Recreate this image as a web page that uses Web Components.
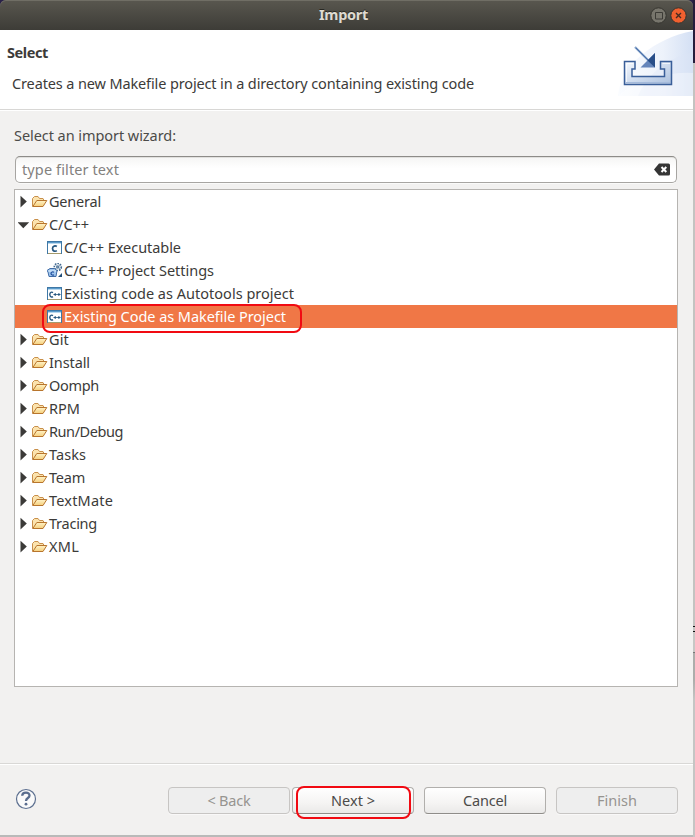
<!DOCTYPE html>
<html lang="en"><head><meta charset="utf-8"><title>Import</title>
<style>
html,body{margin:0;height:837px;overflow:hidden;background:#b9b9b7}
</style></head><body>
<import-dialog></import-dialog>
<script>
const define=(name,html,setup)=>customElements.define(name,class extends HTMLElement{
  connectedCallback(){
    if(this.shadowRoot)return;
    const t=document.createElement('template');t.innerHTML=html;
    this.attachShadow({mode:'open'}).append(t.content.cloneNode(true));
    if(setup)setup.call(this,this.shadowRoot);
  }
});

/* A line of text whose tracking is set so that it takes the width in its w attribute. */
define('ui-text',`<style>:host{display:inline-block;white-space:nowrap;line-height:18px;padding-bottom:2px}span{display:inline-block}</style><span><slot></slot></span>`,
function(root){
  const span=root.querySelector('span'),w=+this.getAttribute('w');
  const natural=span.getBoundingClientRect().width;
  if(w&&natural)span.style.letterSpacing=((w-natural)/this.textContent.length).toFixed(3)+'px';
});

const folder=`<svg width="16" height="16" viewBox="0 0 16 16"><defs><linearGradient id="f" x2="0" y2="1"><stop stop-color="#fff3c8"/><stop offset="1" stop-color="#f5cf7c"/></linearGradient></defs><path d="M.5 12.500V4.500L2.500 2.500h3.500L7.500 4.500H11L11.500 5V7" fill="#fbe3ae" stroke="#c88f4a"/><path d="M.8 12.500L4.800 6.500H14.800L11 12.500Z" fill="url(#f)" stroke="#b8752d" stroke-linejoin="round"/></svg>`;
const file=(s)=>`<svg width="16" height="16" viewBox="0 0 16 16"><rect x=".5" y="1.500" width="14" height="12" fill="#fff" stroke="#3f78a6"/><path d="M1 2h13v1H1z" fill="#5b9bcb"/><path d="M1 3h13v1H1z" fill="#b8d7ed"/><path d="M1 13.500h13" stroke="#a59a6c"/>${s}</svg>`;
const cShape=`<path d="M9.800 6.500C8.500 5.500 5.500 5.800 5.500 8.600S8.500 11.700 9.800 10.700" fill="none" stroke="#275780" stroke-width="1.700"/>`;
const cppShape=`<path d="M6 6.600C4.800 5.700 2.800 6 2.800 8.600S4.800 11.400 6 10.600" fill="none" stroke="#275780" stroke-width="1.400"/><path d="M6.500 8.500h3.300M8.200 7v3M10.200 8.500h3.300M11.900 7v3" stroke="#275780" stroke-width="1"/>`;
const settings=`<svg width="16" height="16" viewBox="0 0 16 16"><g fill="none" stroke="#426a91"><circle cx="10.800" cy="4" r="3.500" stroke-width="1.600" stroke-dasharray="1.600 1"/><circle cx="10.800" cy="4" r="1.200"/><path d="M8 1.500l5.500 5M8 6.500l5.500-5" stroke-width=".6"/></g><path d="M0 7.500L3 5.500h4.500L10 7.500 9 13.500H2L1 9Z" fill="#9fc5ed" stroke="#406ca7"/><path d="M1.500 8h7.500" stroke="#e1f1ff"/><path d="M7 9.300C6 8.600 4 8.800 4 10.500S6 12.400 7 11.700" fill="none" stroke="#204f9d" stroke-width="1.200"/><path d="M11 14h4v-4z" fill="#234f78"/></svg>`;
const icons={folder,c:file(cShape),cpp:file(cppShape),settings};

define('tree-row',`<style>
:host{display:flex;align-items:center;height:23px;padding-left:3px;box-sizing:border-box;color:#3c3b39}
:host([child]){padding-left:18px}
:host([selected]){background:#f07746;color:#fff}
.arrow{width:14px;height:16px;flex:none}.icon{width:16px;height:16px;flex:none;margin-right:1px}
.arrow svg,.icon svg{display:block}
</style><span class="arrow"></span><span class="icon"></span><slot></slot>`,
function(r){
  const state=this.getAttribute('state');
  r.querySelector('.icon').innerHTML=icons[this.getAttribute('icon')||'folder'];
  if(state!=='none')r.querySelector('.arrow').innerHTML=`<svg width="13" height="16"><path d="${state==='open'?'M-.500 5.300H11.200L5.300 11.300Z':'M2.500 1.800L8.800 7.500 2.500 13.500Z'}" fill="#3b3a38"/></svg>`;
});

define('push-button',`<style>
:host{display:flex;align-items:center;justify-content:center;box-sizing:border-box;width:122px;height:27px;border:1px solid #b1afac;border-bottom-color:#8f8d89;border-radius:4px;background:linear-gradient(#fff,#f5f4f3 60%,#eae9e8);box-shadow:0 1px #fff8;color:#4c4b49}
:host([disabled]){background:#eee;border-color:#c7c5c3;color:#969490}
</style><slot></slot>`);

define('title-bar',`<style>
:host{display:grid;grid-template-columns:1fr auto 1fr;align-items:center;height:30px;background:linear-gradient(#59574f,#3d3c37);border-radius:6px 6px 0 0;box-shadow:inset 0 1px #706e65;color:#dfdbd2;font-weight:700;text-shadow:0 -1px #292822}
.title{grid-column:2;margin-left:-6px;padding-bottom:2px}.controls{display:flex;gap:3px;justify-content:end;padding-right:6px}svg{display:block}
</style><span class="title"><slot></slot></span><span class="controls">
<svg width="17" height="17"><circle cx="8.500" cy="8.500" r="7.700" fill="#77756c" stroke="#35342f"/><path d="M5.500 5.500h7v6.500h-7z" fill="none" stroke="#3c3b36"/></svg>
<svg width="17" height="17"><circle cx="8.500" cy="8.500" r="7.700" fill="#f0602f" stroke="#35342f"/><path d="M6 6l5 5M11 6l-5 5" stroke="#462a20" stroke-width="1.400"/></svg></span>`);

define('wizard-header',`<style>
:host{display:flex;justify-content:space-between;height:79px;background:#fff;border-bottom:1px solid #d8d7d5;box-shadow:0 1px #fff}
.copy{display:flex;flex-direction:column;padding:12px 0 0 7px;color:#3c3b39}
.heading{font-weight:700;height:31px}.description{padding-left:5px}svg{display:block}
</style><div class="copy"><div class="heading"><slot name="heading"></slot></div><div class="description"><slot></slot></div></div>
<svg width="75" height="67" viewBox="0 0 75 67"><defs><linearGradient id="g"><stop stop-color="#fafcff"/><stop offset=".6" stop-color="#edf2fb"/><stop offset="1" stop-color="#d4e0f4"/></linearGradient><linearGradient id="i" x2="1" y2="1"><stop stop-color="#f5f9ff"/><stop offset="1" stop-color="#abc0de"/></linearGradient></defs>
<path d="M0 66C2 36 36 8 75 1v65Z" fill="url(#g)"/><path d="M20 66C31 41 51 28 75 22v44Z" fill="#dce6f7" opacity=".35"/><path d="M35 48Q56 42 75 43v23H0Q14 53 35 48Z" fill="#fff" opacity=".35"/>
<path d="M6.500 31.500H17V39H14V46.500H46.500V39H42.500V31.500H53.500V54.500H6.500Z" fill="url(#i)" stroke="#395e99" stroke-width="1.500"/><path d="M8.500 33.500H15M8.500 33.500V52M44.500 33.500H52" fill="none" stroke="#fff" opacity=".7"/><path d="M8 52.500h44" stroke="#a4badb"/>
<path d="M17 17L32 32" stroke="#83a1c9" stroke-width="2.200"/><path d="M18 18L32 32" stroke="#486eaa"/><path d="M37 23V37.500H22.500Z" fill="#6686bb"/><path d="M37 23V37.500L29.500 30.500Z" fill="#294e88"/></svg>`);

define('filter-field',`<style>
:host{display:flex;align-items:center;justify-content:space-between;box-sizing:border-box;width:662px;height:27px;margin-left:1px;padding:0 6px;border:1px solid #a7a5a2;border-top-color:#8d8b88;border-radius:5px;background:linear-gradient(#f5f5f4,#fff 45%);box-shadow:inset 0 1px #e1e0de,0 1px #fafaf9;color:#83817e}
svg{display:block}
</style><slot></slot><svg width="16" height="13"><path d="M0 6.500L5 .5H14.500Q16 .5 16 2V11Q16 12.500 14.500 12.500H5Z" fill="#353535"/><path d="M7.500 4l4.800 5M12.300 4l-4.800 5" stroke="#fff" stroke-width="2"/></svg>`);

define('wizard-tree',`<style>:host{display:block;box-sizing:border-box;width:664px;height:498px;margin-top:6px;border:1px solid #b6b4b1;background:#fff}</style><slot></slot>`);

/* Red rounded frame laid over the control that it points out. */
define('callout-frame',`<style>:host{position:absolute;box-sizing:border-box;border:2px solid #f10a12;border-radius:8px;pointer-events:none}</style>`);

const row=(label,w,attrs='')=>`<tree-row ${attrs}><ui-text w="${w}">${label}</ui-text></tree-row>`;
define('import-dialog',`<style>
:host{display:grid;grid-template-columns:693px 2px;height:837px;position:relative;font:14.500px/20px "Noto Sans","Open Sans",sans-serif;background:linear-gradient(#b1b1b0,#b9bab9)}
.window{display:flex;flex-direction:column;height:835px;background:linear-gradient(#292148 0 10px,#f2f1f0 30px)}
.side{height:837px;background:linear-gradient(#251d3c 0 63px,#c4c3c1 63px 626px,#111 626px 627px,#c5c5c3 627px 631px,#111 631px 632px,#c8c7c5 632px 652px,#777 652px 653px,#adadab 653px 680px,#c5c5c4 700px)}
.content{padding:15px 14px 0;height:638px;color:#4c4b49}
.label{height:31px}
footer{display:flex;flex:1;align-items:flex-start;border-top:1px solid #d9d8d6;box-shadow:inset 0 1px #fff;padding:23px 15px 0}
.help{width:22px;height:22px;margin-top:1px}
.nav{display:flex;margin-left:131px;gap:2px}.end{display:flex;gap:10px;margin-left:10px}
.row-frame{left:42px;top:304px;width:260px;height:29px}.next-frame{left:296px;top:786px;width:115px;height:33px}
</style><div class="window">
<title-bar><ui-text w="49">Import</ui-text></title-bar>
<wizard-header><ui-text slot="heading" w="41">Select</ui-text><ui-text w="462">Creates a new Makefile project in a directory containing existing code</ui-text></wizard-header>
<section class="content"><div class="label"><ui-text w="162">Select an import wizard:</ui-text></div>
<filter-field><ui-text w="97">type filter text</ui-text></filter-field>
<wizard-tree>${row('General',52)+row('C/C++',40,'state="open"')+row('C/C++ Executable',117,'child state="none" icon="c"')+row('C/C++ Project Settings',150,'child state="none" icon="settings"')+row('Existing code as Autotools project',230,'child state="none" icon="cpp"')+row('Existing Code as Makefile Project',222,'child selected state="none" icon="cpp"')+[['Git',20],['Install',41],['Oomph',50],['RPM',31],['Run/Debug',74],['Tasks',37],['Team',36],['TextMate',64],['Tracing',48],['XML',30]].map(x=>row(...x)).join('')}</wizard-tree></section>
<footer><svg class="help" viewBox="0 0 22 22"><circle cx="11" cy="11" r="9.500" fill="#fafafa" stroke="#5d7090" stroke-width="1.200"/><path d="M7.200 7.700C7.300 3.500 14.800 3.500 14.500 7.700C14.300 10.200 11 9.800 11 13" fill="none" stroke="#5a6d8e" stroke-width="2.300"/><circle cx="11" cy="16.200" r="1.400" fill="#5a6d8e"/></svg>
<div class="nav"><push-button disabled><ui-text w="43">&lt; Back</ui-text></push-button><push-button><ui-text w="44">Next &gt;</ui-text></push-button></div>
<div class="end"><push-button><ui-text w="44">Cancel</ui-text></push-button><push-button disabled><ui-text w="40">Finish</ui-text></push-button></div></footer>
</div><div class="side"></div>
<callout-frame class="row-frame"></callout-frame><callout-frame class="next-frame"></callout-frame>`);
</script></body></html>
